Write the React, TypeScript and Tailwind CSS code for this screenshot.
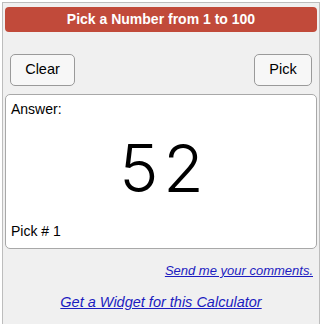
export default function App() {
  return (
    <div className="w-[324px] h-[324px] overflow-hidden bg-white pt-[2px] pl-[2px] font-['Liberation_Sans',Arial,sans-serif]">
      <div className="w-[318px] h-[340px] border border-[#bdbdbd] bg-[#f0f0f0] px-[2px] pt-[4px]">
        <div className="h-[25px] rounded-[4px] bg-[#c14a3a] flex items-center justify-center text-white font-bold text-[14px]">
          Pick a Number from 1 to 100
        </div>
        <div className="flex justify-between px-[5px] mt-[22px]">
          <button className="w-[65px] h-[32px] rounded-[5px] border border-[#9a9a9a] bg-[#f7f7f7] text-[14.5px] text-black">
            Clear
          </button>
          <button className="w-[58px] h-[32px] rounded-[5px] border border-[#9a9a9a] bg-[#f7f7f7] text-[14.5px] text-black">
            Pick
          </button>
        </div>
        <div className="mt-[8px] h-[155px] rounded-[5px] border border-[#a8a8a8] bg-white flex flex-col px-[5px] pt-[4px] pb-[6px] text-[14px] text-black">
          <div>Answer:</div>
          <div className="flex-1 flex items-center justify-center pb-[6px] pl-[6px] font-['Inter',sans-serif] font-light text-[66px] tracking-[5px] leading-none">
            52
          </div>
          <div>Pick # 1</div>
        </div>
        <div className="flex justify-end pr-[4px] mt-[12px]">
          <a href="#" className="italic underline text-[13px] text-[#1c1cc0]">
            Send me your comments.
          </a>
        </div>
        <div className="flex justify-center mt-[11px]">
          <a href="#" className="italic underline text-[14.5px] text-[#1c1cc0]">
            Get a Widget for this Calculator
          </a>
        </div>
      </div>
    </div>
  );
}
